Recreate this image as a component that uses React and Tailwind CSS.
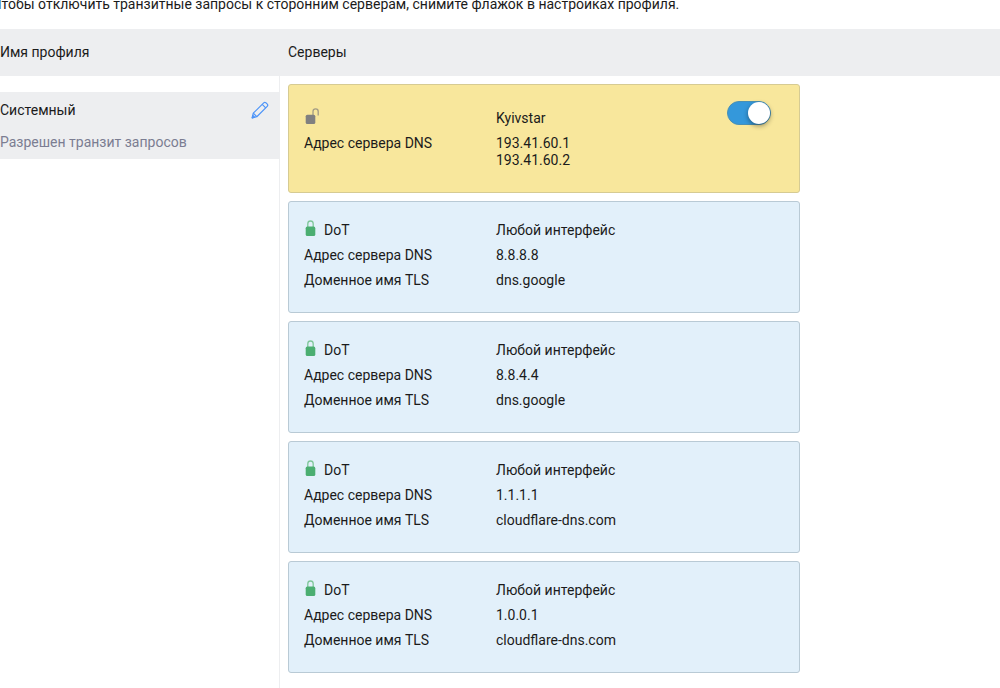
import { useState } from 'react'

const servers = [
  { name: 'Kyivstar', addresses: ['193.41.60.1', '193.41.60.2'], provider: true },
  { type: 'DoT', name: 'Любой интерфейс', addresses: ['8.8.8.8'], domain: 'dns.google' },
  { type: 'DoT', name: 'Любой интерфейс', addresses: ['8.8.4.4'], domain: 'dns.google' },
  { type: 'DoT', name: 'Любой интерфейс', addresses: ['1.1.1.1'], domain: 'cloudflare-dns.com' },
  { type: 'DoT', name: 'Любой интерфейс', addresses: ['1.0.0.1'], domain: 'cloudflare-dns.com' },
]

function LockIcon() {
  return (
    <svg width="15" height="16" viewBox="0 1 15 16" className="shrink-0 overflow-visible" aria-hidden="true">
      <path d="M3.8 6V2.8a2.7 2.8 0 0 1 5.4 0V6" fill="none" stroke="#7fc79a" strokeWidth="1.3" />
      <rect x="1.7" y="5.6" width="9.6" height="9.4" rx="1.6" fill="#4bae71" />
    </svg>
  )
}

function UnlockIcon() {
  return (
    <svg width="15" height="16" viewBox="0 1 15 16" className="shrink-0 overflow-visible" aria-hidden="true">
      <path d="M9 6V2.4a2.6 2.6 0 0 1 5.2 0V6.4" fill="none" stroke="#a39c85" strokeWidth="1.3" />
      <rect x="1.7" y="5.7" width="9.6" height="9.3" rx="1.6" fill="#808080" />
    </svg>
  )
}

function PencilIcon() {
  return (
    <svg
      width="18"
      height="18"
      viewBox="0 0 18 18"
      fill="none"
      stroke="#4d94f8"
      strokeWidth="1.2"
      strokeLinejoin="round"
      aria-hidden="true"
    >
      <path d="M1.2 16.8 2.3 12.2 12.7 1.8Q13.7.8 14.8 1.7L16.3 3.2Q17.3 4.3 16.2 5.4L5.8 15.7Z" />
      <path d="M11.2 3.3 14.7 6.8M2.3 12.2 5.8 15.7" />
      <path d="M1.2 16.8 1.8 14.4 3.6 16.2Z" fill="#4d94f8" />
    </svg>
  )
}

function Toggle({ checked, onChange, label }) {
  return (
    <label className="flex cursor-pointer">
      <input type="checkbox" checked={checked} onChange={onChange} aria-label={label} className="peer sr-only" />
      <span
        className="flex h-6 w-11 rounded-full border border-gray-400 bg-gray-300 peer-checked:justify-end
                   peer-checked:border-[#4a90b4] peer-checked:bg-[#3498db]"
      >
        <span className="size-[22px] rounded-full bg-white shadow-[0_2px_5px_rgba(0,0,0,0.4)]" />
      </span>
    </label>
  )
}

function Row({ label, children }) {
  return (
    <div className="flex">
      <dt className="w-48 shrink-0">{label}</dt>
      <dd>{children}</dd>
    </div>
  )
}

function ServerCard({ server }) {
  const [enabled, setEnabled] = useState(true)

  return (
    <li
      className={
        server.provider
          ? 'rounded-[3px] border border-[#d6cb93] bg-[#f8e79c] px-[15px] pt-4 pb-[23px]'
          : 'rounded-[3px] border border-[#b9cad5] bg-[#e2f0fa] px-[15px] pt-5 pb-[23px]'
      }
    >
      <div className="mb-2 flex items-end">
        <div className="flex h-[17px] w-48 shrink-0 items-start gap-[5px]">
          {server.provider ? <UnlockIcon /> : <LockIcon />}
          {server.type}
        </div>
        <h3 className="grow">{server.name}</h3>
        {server.provider && (
          <div className="mr-[13px] h-[26px]">
            <Toggle checked={enabled} onChange={() => setEnabled(!enabled)} label={server.name} />
          </div>
        )}
      </div>
      <dl className="flex flex-col gap-2">
        <Row label="Адрес сервера DNS">
          {server.addresses.map((address) => (
            <p key={address}>{address}</p>
          ))}
        </Row>
        {server.domain && <Row label="Доменное имя TLS">{server.domain}</Row>}
      </dl>
    </li>
  )
}

export default function App() {
  return (
    <main className="flex min-h-screen flex-col overflow-hidden bg-white font-[Roboto,sans-serif] text-[14px] leading-[17px] text-[#1b1b1b]">
      <p className="-indent-2 pb-[21px] leading-2">
        Чтобы отключить транзитные запросы к сторонним серверам, снимите флажок в настройках профиля.
      </p>

      {/* Column titles */}
      <div className="flex bg-[#edeef0] py-[15px]">
        <h2 className="w-72 shrink-0">Имя профиля</h2>
        <h2>Серверы</h2>
      </div>

      <div className="flex grow">
        {/* Profiles */}
        <aside className="w-[280px] shrink-0 border-r border-[#edeef0] pt-4">
          <div className="bg-[#edeef0] py-2">
            <div className="flex items-center justify-between pt-[1px] pr-[10px]">
              <h3>Системный</h3>
              <button type="button" aria-label="Изменить" className="cursor-pointer">
                <PencilIcon />
              </button>
            </div>
            <p className="pt-[15px] text-[#7b7d92]">Разрешен транзит запросов</p>
          </div>
        </aside>

        {/* Servers */}
        <ul className="flex min-w-0 max-w-[528px] grow flex-col gap-2 p-2">
          {servers.map((server) => (
            <ServerCard key={server.addresses[0]} server={server} />
          ))}
        </ul>
      </div>
    </main>
  )
}
